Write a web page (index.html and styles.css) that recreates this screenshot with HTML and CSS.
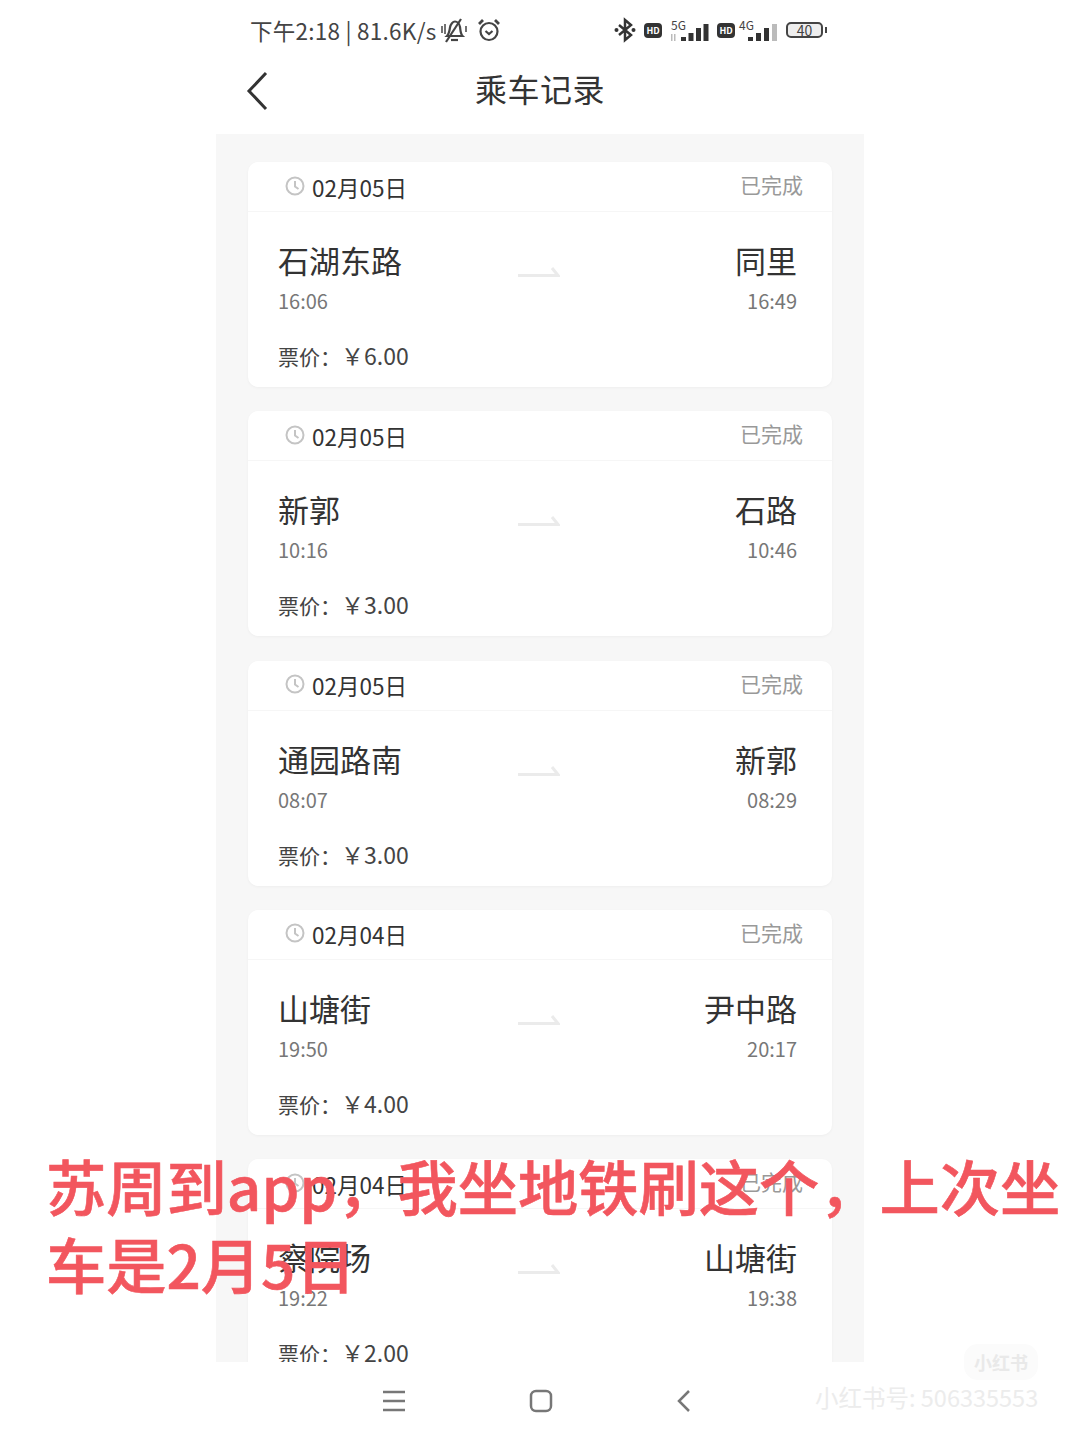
FILE: index.html
```html
<!DOCTYPE html>
<html lang="zh-CN">
<head>
    <meta charset="UTF-8">
    <title>乘车记录</title>
    <link rel="stylesheet" href="styles.css">
</head>
<body>
    <div class="app">
        <!-- Status bar -->
        <div class="status-bar">
            <div class="status-left">
                <span>下午2:18 | 81.6K/s</span>
                <svg class="icon-bell" width="28" height="26" viewBox="0 0 28 26" fill="none" stroke="#444" stroke-width="2.200">
                    <path d="M7 19c2-2 2.500-5 3-8.500s3-6 5-6 4.500 2 5 5.500.5 7 2.500 9z"/>
                    <path d="M11 23h7"/>
                    <path d="M6 25L21 2"/>
                    <path d="M2 9v7M5 7v10M26 9v6" stroke-width="1.500"/>
                </svg>
                <svg class="icon-alarm" width="24" height="24" viewBox="0 0 24 24" fill="none" stroke="#444" stroke-width="2.200">
                    <circle cx="12" cy="13.500" r="8.500"/>
                    <path d="M8.500 13l3.500 3 3.500-3"/>
                    <path d="M2 6l4-4M22 6l-4-4" stroke-width="2.800"/>
                </svg>
            </div>
            <div class="status-right">
                <svg width="22" height="26" viewBox="0 0 22 26" fill="none" stroke="#333" stroke-width="2.500">
                    <path d="M5 8l12 10-6 5V3l6 5L5 18"/>
                    <circle cx="2.500" cy="13" r="2" fill="#333" stroke="none"/>
                    <circle cx="19.500" cy="13" r="2" fill="#333" stroke="none"/>
                </svg>
                <span class="hd">HD</span>
                <span class="signal">
                    <span class="net">5G</span>
                    <svg width="39" height="18" viewBox="0 0 39 18" fill="#333">
                        <rect x="1" y="11" width="1.500" height="7" fill="#bbb"/>
                        <rect x="4" y="11" width="1.500" height="7" fill="#bbb"/>
                        <rect x="11" y="14" width="5" height="4"/>
                        <rect x="18.500" y="10" width="5" height="8"/>
                        <rect x="26" y="5" width="5" height="13"/>
                        <rect x="33.500" y="1" width="5" height="17"/>
                    </svg>
                </span>
                <span class="hd">HD</span>
                <span class="signal signal-second">
                    <span class="net">4G</span>
                    <svg width="39" height="18" viewBox="0 0 39 18" fill="#333">
                        <rect x="9" y="14" width="5" height="4"/>
                        <rect x="17" y="10" width="5" height="8"/>
                        <rect x="25" y="5" width="5" height="13"/>
                        <rect x="33" y="1" width="5" height="17" fill="#bbb"/>
                    </svg>
                </span>
                <span class="battery">40</span>
            </div>
        </div>

        <!-- Header -->
        <header class="page-head">
            <svg class="back" width="26" height="42" viewBox="0 0 26 42" fill="none" stroke="#333" stroke-width="3">
                <path d="M22 3L5 21l17 18"/>
            </svg>
            <h1>乘车记录</h1>
        </header>

        <!-- Trip list -->
        <main class="list" id="trip-list"></main>

        <!-- Bottom nav -->
        <nav class="nav-bar">
            <svg width="24" height="22" viewBox="0 0 24 22" fill="none" stroke="#777" stroke-width="2.500">
                <path d="M1 2h22M1 11h22M1 20h22"/>
            </svg>
            <svg width="24" height="24" viewBox="0 0 24 24" fill="none" stroke="#777" stroke-width="2.500">
                <rect x="2" y="2" width="20" height="20" rx="5"/>
            </svg>
            <svg width="16" height="24" viewBox="0 0 16 24" fill="none" stroke="#777" stroke-width="2.500">
                <path d="M13 2L3 12l10 10"/>
            </svg>
        </nav>
    </div>

    <!-- Overlays on the screenshot -->
    <div class="caption">苏周到app，我坐地铁刷这个，上次坐<br>车是2月5日</div>
    <div class="badge">小红书</div>
    <div class="watermark">小红书号: 506335553</div>

    <script src="trips.js"></script>
</body>
</html>
```

FILE: trips.js
```js
const trips = [
    { date: '02月05日', from: '石湖东路', to: '同里', start: '16:06', end: '16:49', price: '6.00' },
    { date: '02月05日', from: '新郭', to: '石路', start: '10:16', end: '10:46', price: '3.00' },
    { date: '02月05日', from: '通园路南', to: '新郭', start: '08:07', end: '08:29', price: '3.00' },
    { date: '02月04日', from: '山塘街', to: '尹中路', start: '19:50', end: '20:17', price: '4.00' },
    { date: '02月04日', from: '察院场', to: '山塘街', start: '19:22', end: '19:38', price: '2.00' }
];

const list = document.getElementById('trip-list');

trips.forEach(trip => {
    const card = document.createElement('section');
    card.className = 'card';
    card.innerHTML = `
        <div class="card-head">
            <div class="date">
                <svg width="20" height="20" viewBox="0 0 20 20" fill="none" stroke="#c4c4c4" stroke-width="2">
                    <circle cx="10" cy="10" r="8.500"/>
                    <path d="M10 5v5.500l3.500 2.500"/>
                </svg>
                <span>${trip.date}</span>
            </div>
            <span class="state">已完成</span>
        </div>
        <div class="route">
            <div class="stop">
                <div class="stop-name">${trip.from}</div>
                <div class="stop-time">${trip.start}</div>
            </div>
            <svg class="arrow" width="42" height="12" viewBox="0 0 42 12" fill="none" stroke="#ebebeb" stroke-width="3">
                <path d="M0 9.500h40L34 2"/>
            </svg>
            <div class="stop stop-end">
                <div class="stop-name">${trip.to}</div>
                <div class="stop-time">${trip.end}</div>
            </div>
        </div>
        <div class="price"><span class="price-label">票价：</span>￥${trip.price}</div>
    `;
    list.appendChild(card);
});
```

FILE: styles.css
```css
body {
    margin: 0;
    width: 1080px;
    height: 1440px;
    overflow: hidden;
    background-color: #fff;
    font-family: "Noto Sans CJK SC", "Noto Sans", sans-serif;
    color: #333;
}

.app {
    width: 648px;
    margin: 0 auto;
    display: flex;
    flex-direction: column;
    height: 1440px;
}

/* Status bar */
.status-bar {
    height: 60px;
    display: flex;
    justify-content: space-between;
    align-items: center;
    padding: 0 41px 0 34px;
    flex-shrink: 0;
}

.status-left {
    display: flex;
    align-items: center;
    gap: 4px;
    font-size: 22.500px;
    letter-spacing: 0.250px;
    color: #444;
    margin-top: -1px;
}

.icon-alarm {
    margin-left: 5px;
}

.status-right {
    display: flex;
    align-items: center;
    gap: 8px;
}

.hd {
    width: 18px;
    height: 15px;
    background-color: #333;
    border-radius: 4px;
    color: #fff;
    font-size: 9px;
    font-weight: 700;
    line-height: 15px;
    text-align: center;
}

.signal {
    position: relative;
    display: flex;
    align-items: flex-end;
    width: 39px;
    height: 21px;
}

.signal-second {
    margin-left: -4px;
}

.net {
    position: absolute;
    top: -2px;
    left: 1px;
    font-size: 12px;
    line-height: 14px;
    color: #444;
}

.signal-second .net {
    left: 0;
}

.battery {
    position: relative;
    width: 33px;
    height: 12px;
    border: 2px solid #444;
    border-radius: 5px;
    font-size: 14px;
    line-height: 12px;
    text-align: center;
    color: #444;
    background-color: #eee;
}

.battery::after {
    content: "";
    position: absolute;
    right: -6px;
    top: 3px;
    width: 2px;
    height: 6px;
    background-color: #444;
}

/* Header */
.page-head {
    position: relative;
    height: 74px;
    flex-shrink: 0;
    display: flex;
    align-items: center;
    justify-content: center;
}

.page-head h1 {
    margin: 0 0 18px;
    font-size: 32px;
    font-weight: 400;
    letter-spacing: 0.500px;
    color: #333;
}

.back {
    position: absolute;
    left: 28px;
    top: 10px;
}

/* Trip list */
.list {
    height: 1228px;
    flex-shrink: 0;
    overflow: hidden;
    box-sizing: border-box;
    padding: 28px 32px 0;
    background-color: #f7f7f7;
    display: flex;
    flex-direction: column;
    gap: 24.250px;
}

.card {
    height: 225px;
    flex-shrink: 0;
    background-color: #fff;
    border-radius: 10px;
    box-shadow: 0 1px 3px rgba(0, 0, 0, 0.04);
    display: flex;
    flex-direction: column;
}

.card-head {
    height: 49px;
    flex-shrink: 0;
    display: flex;
    justify-content: space-between;
    align-items: center;
    padding: 0 29px 0 37px;
    border-bottom: 1px solid #f6f6f6;
}

.date {
    display: flex;
    align-items: center;
    gap: 7px;
    font-size: 22.500px;
    color: #333;
}

.date svg {
    margin-top: -2px;
}

.state {
    font-size: 21px;
    color: #999;
    margin-top: -5px;
}

.route {
    position: relative;
    display: flex;
    justify-content: space-between;
    padding: 24px 35px 0 30px;
}

.stop-name {
    font-size: 31px;
    line-height: 48px;
    color: #333;
}

.stop-time {
    margin-top: 3px;
    font-size: 20px;
    line-height: 28px;
    color: #777;
}

.stop-end {
    text-align: right;
}

.arrow {
    position: absolute;
    left: 270px;
    top: 54px;
}

.price {
    margin-top: 24px;
    padding-left: 30px;
    font-size: 23px;
    line-height: 32px;
    color: #444;
}

.price-label {
    font-size: 21px;
}

/* Bottom nav */
.nav-bar {
    flex: 1;
    display: flex;
    justify-content: space-between;
    align-items: center;
    padding: 0 172px 0 166px;
}

/* Overlays */
.caption {
    position: absolute;
    left: 46px;
    top: 1146px;
    width: 1034px;
    font-size: 60.250px;
    font-weight: 500;
    -webkit-text-stroke: 0.600px #f2565e;
    line-height: 78px;
    color: #f2565e;
}

.badge {
    position: absolute;
    left: 964px;
    top: 1344px;
    width: 74px;
    height: 36px;
    border-radius: 14px;
    background-color: #fbfbfb;
    color: #e9e9e9;
    font-size: 18px;
    line-height: 36px;
    text-align: center;
    font-weight: 700;
}

.watermark {
    position: absolute;
    left: 815px;
    top: 1380px;
    font-size: 23.500px;
    line-height: 34px;
    color: #ececec;
    white-space: nowrap;
}
```
